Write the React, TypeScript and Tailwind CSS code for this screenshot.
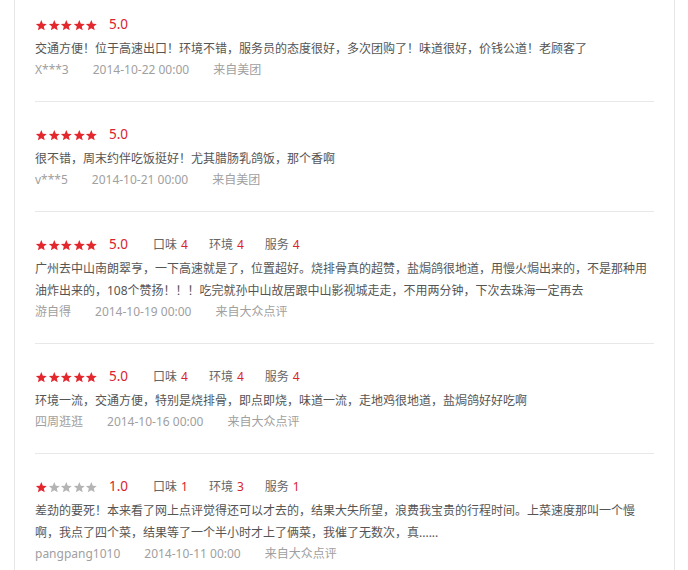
import React from "react";

type Review = {
  score: number;
  sub?: [number, number, number];
  text: string;
  user: string;
  date: string;
  source: string;
};

const reviews: Review[] = [
  {
    score: 5,
    text: "交通方便！位于高速出口！环境不错，服务员的态度很好，多次团购了！味道很好，价钱公道！老顾客了",
    user: "X***3",
    date: "2014-10-22 00:00",
    source: "来自美团",
  },
  {
    score: 5,
    text: "很不错，周末约伴吃饭挺好！尤其腊肠乳鸽饭，那个香啊",
    user: "v***5",
    date: "2014-10-21 00:00",
    source: "来自美团",
  },
  {
    score: 5,
    sub: [4, 4, 4],
    text: "广州去中山南朗翠亨，一下高速就是了，位置超好。烧排骨真的超赞，盐焗鸽很地道，用慢火焗出来的，不是那种用油炸出来的，108个赞扬！！！吃完就孙中山故居跟中山影视城走走，不用两分钟，下次去珠海一定再去",
    user: "游自得",
    date: "2014-10-19 00:00",
    source: "来自大众点评",
  },
  {
    score: 5,
    sub: [4, 4, 4],
    text: "环境一流，交通方便，特别是烧排骨，即点即烧，味道一流，走地鸡很地道，盐焗鸽好好吃啊",
    user: "四周逛逛",
    date: "2014-10-16 00:00",
    source: "来自大众点评",
  },
  {
    score: 1,
    sub: [1, 3, 1],
    text: "差劲的要死！本来看了网上点评觉得还可以才去的，结果大失所望，浪费我宝贵的行程时间。上菜速度那叫一个慢啊，我点了四个菜，结果等了一个半小时才上了俩菜，我催了无数次，真......",
    user: "pangpang1010",
    date: "2014-10-11 00:00",
    source: "来自大众点评",
  },
];

function Star({ on }: { on: boolean }) {
  return (
    <svg viewBox="0 0 24 24" className="w-[12.6px] h-[12.6px] block">
      <path
        d="M12 1.8l2.95 7.05 7.45.55-5.7 4.85 1.8 7.35L12 17.6l-6.5 4 1.8-7.35L1.6 9.4l7.45-.55z"
        fill={on ? "#e4262d" : "#b4b4b4"}
      />
    </svg>
  );
}

function ReviewItem({ r, first }: { r: Review; first: boolean }) {
  const labels = ["口味", "环境", "服务"];
  return (
    <div
      className={`${first ? "pt-[12px]" : "pt-[20px]"} pb-[21px] border-b border-[#e8e8e8]`}
    >
      <div className="h-[26px] flex items-center">
        <div className="flex">
          {[0, 1, 2, 3, 4].map((i) => (
            <Star key={i} on={i < r.score} />
          ))}
        </div>
        <span className="ml-[11px] text-[13.5px] leading-none text-[#d9232d]">
          {r.score.toFixed(1)}
        </span>
        {r.sub && (
          <div className="flex ml-[25px] gap-[21px] text-[12px] leading-none">
            {r.sub.map((v, i) => (
              <span key={i} className="text-[#666]">
                {labels[i]}
                <span className="ml-[4px] text-[#d9232d]">{v}</span>
              </span>
            ))}
          </div>
        )}
      </div>
      <p className="text-[12px] leading-[22px] text-[#555]">{r.text}</p>
      <div className="flex text-[12px] leading-[20px] text-[#a0a0a0]">
        <span className="mr-[24px]">{r.user}</span>
        <span className="mr-[24px]">{r.date}</span>
        <span>{r.source}</span>
      </div>
    </div>
  );
}

export default function App() {
  return (
    <div className="w-[688px] h-[570px] overflow-hidden bg-white font-['Noto_Sans','Noto_Sans_CJK_SC',sans-serif]">
      <div className="ml-[14px] w-[661px] min-h-[600px] border-x border-[#e6e6e6] px-[20px]">
        {reviews.map((r, i) => (
          <ReviewItem key={i} r={r} first={i === 0} />
        ))}
      </div>
    </div>
  );
}
